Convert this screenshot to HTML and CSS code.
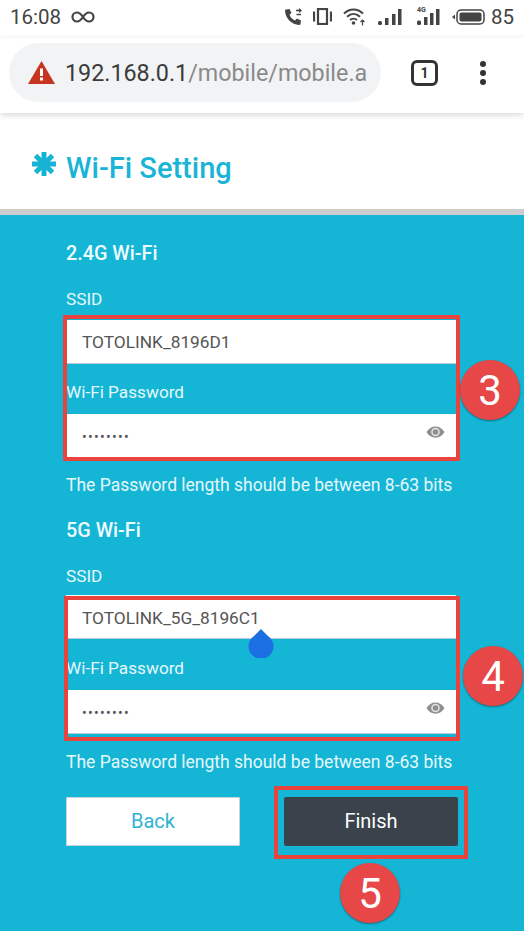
FILE: index.html
```html
<!DOCTYPE html>
<html lang="en">
<head>
<meta charset="UTF-8">
<meta name="viewport" content="width=device-width, initial-scale=1.0">
<title>Wi-Fi Setting</title>
<link rel="stylesheet" href="styles.css">
</head>
<body>
<div id="page">

<div class="statusbar">
  <span class="clock">16:08</span>
  <svg class="infinity" width="24" height="12" viewBox="0 0 24 12"><path d="M12 6C10 3 8.500 1.500 6 1.500A4.500 4.500 0 0 0 6 10.500C8.500 10.500 10 9 12 6C14 3 15.500 1.500 18 1.500A4.500 4.500 0 0 1 18 10.500C15.500 10.500 14 9 12 6Z" fill="none" stroke="#444" stroke-width="2.200"/></svg>
  <span class="spacer"></span>
  <svg class="ic-call" width="19" height="18" viewBox="0 0 19 18"><path d="M2 1.500L5.500 1L7.500 5L5.500 6.800C6.500 9.500 8.500 11.500 11 12.500L13 10.500L17 12.500L16.500 16C16.400 16.700 16 17 15.300 17C7.500 16.500 1.500 10.500 1 2.700C1 2 1.300 1.600 2 1.500Z" fill="#444"/><path d="M12 2.500H17M15 .8L17 2.500L15 4.200M17 6.500H12.500" fill="none" stroke="#444" stroke-width="1.300"/></svg>
  <svg class="ic-vibrate" width="19" height="17" viewBox="0 0 19 17"><rect x="5" y="1" width="9" height="15" fill="none" stroke="#444" stroke-width="2.200"/><path d="M1 3.500V13.500M18 3.500V13.500" stroke="#444" stroke-width="2.200"/></svg>
  <svg class="ic-wifi" width="23" height="19" viewBox="0 0 23 19"><path d="M1 6.500C6.500 1 14.500 1 20 6.500M4 9.800C8 6 13 6 17 9.800M7 13C9 11.200 12 11.200 14 13" fill="none" stroke="#444" stroke-width="2"/><circle cx="10.500" cy="16" r="1.800" fill="#444"/><path d="M19.500 18.500V13M17.500 15L19.500 13L21.500 15" fill="none" stroke="#444" stroke-width="1.200"/></svg>
  <svg class="ic-signal" width="24" height="16" viewBox="0 0 24 16"><g fill="#444"><rect x="0" y="12" width="4" height="4" rx="1.500"/><rect x="7" y="9" width="3.500" height="7"/><rect x="14" y="5" width="3.500" height="11"/><rect x="20" y="0" width="3.500" height="16"/></g></svg>
  <span class="ic-4g">
    <span class="tiny">4G</span>
    <svg width="23" height="16" viewBox="0 0 23 16"><g fill="#444"><rect x="0" y="11.500" width="4" height="4.500" rx="1.500"/><rect x="7" y="8" width="3.500" height="8"/><rect x="13" y="4" width="3.500" height="12"/><rect x="19" y="0" width="3.500" height="16"/></g></svg>
  </span>
  <svg class="ic-battery" width="33" height="16" viewBox="0 0 33 16"><path d="M0 8L3 5.500V10.500Z" fill="#444"/><rect x="5" y="1" width="27" height="14" rx="4" fill="none" stroke="#444" stroke-width="1.500"/><rect x="7.500" y="3.500" width="22" height="9" rx="2" fill="#444"/></svg>
  <span class="batt-num">85</span>
</div>

<div class="toolbar">
  <div class="urlbar">
    <svg class="warn" width="27" height="23" viewBox="0 0 27 23"><path d="M13.500 0L27 23H0Z" fill="#c6351f"/><rect x="12" y="7.500" width="3" height="7.500" fill="#fff"/><rect x="12" y="16.500" width="3" height="3" fill="#fff"/></svg>
    <span class="url"><span class="host">192.168.0.1</span>/mobile/mobile.a</span>
  </div>
  <span class="tabcount">1</span>
  <span class="menu"><i></i><i></i><i></i></span>
</div>

<div class="heading">
  <svg class="star" width="24" height="24" viewBox="0 0 24 24"><g stroke="#17b3d4" stroke-width="5"><path d="M12 0V24"/><path d="M0 12H24"/><path d="M3.500 3.500L20.500 20.500"/><path d="M20.500 3.500L3.500 20.500"/></g></svg>
  <h1>Wi-Fi Setting</h1>
</div>

<div class="content">
  <h2 class="band">2.4G Wi-Fi</h2>
  <label class="lbl ssid-lbl">SSID</label>
  <div class="field">TOTOLINK_8196D1</div>
  <label class="lbl pw-lbl">Wi-Fi Password</label>
  <div class="field">
    <span class="dots">••••••••</span>
    <svg class="eye" width="19" height="14" viewBox="0 0 19 14"><path d="M.5 7C4.500 -.5 14.500 -.5 18.500 7C14.500 14.500 4.500 14.500 .5 7Z" fill="#8f8f8f"/><circle cx="9.500" cy="7" r="4.300" fill="#e4e4e4"/><circle cx="9.500" cy="7" r="2.800" fill="#8f8f8f"/></svg>
  </div>
  <p class="hint">The Password length should be between 8-63 bits</p>

  <h2 class="band second">5G Wi-Fi</h2>
  <label class="lbl ssid-lbl">SSID</label>
  <div class="field short">TOTOLINK_5G_8196C1</div>
  <label class="lbl pw-lbl second">Wi-Fi Password</label>
  <div class="field">
    <span class="dots">••••••••</span>
    <svg class="eye" width="19" height="14" viewBox="0 0 19 14"><path d="M.5 7C4.500 -.5 14.500 -.5 18.500 7C14.500 14.500 4.500 14.500 .5 7Z" fill="#8f8f8f"/><circle cx="9.500" cy="7" r="4.300" fill="#e4e4e4"/><circle cx="9.500" cy="7" r="2.800" fill="#8f8f8f"/></svg>
  </div>
  <p class="hint second">The Password length should be between 8-63 bits</p>

  <div class="buttons">
    <button class="btn btn-back">Back</button>
    <button class="btn btn-finish">Finish</button>
  </div>
</div>

<!-- annotations drawn over the screenshot -->
<div class="mark mark-a"></div>
<div class="mark mark-b"></div>
<div class="mark mark-c"></div>
<div class="step step-3">3</div>
<div class="step step-4">4</div>
<div class="step step-5">5</div>
<svg class="handle" width="26" height="30" viewBox="0 0 26 30"><path d="M13 1L20 8A12.500 12.500 0 1 1 6 8Z" fill="#1c6fe3"/></svg>

</div>
</body>
</html>
```

FILE: styles.css
```css
* {
    box-sizing: border-box;
}
html, body {
    margin: 0;
    padding: 0;
}
body {
    font-family: Roboto, "Liberation Sans", sans-serif;
    background-color: #14b5d5;
}
#page {
    position: relative;
    width: 524px;
    height: 931px;
    overflow: hidden;
}

/* status bar */
.statusbar {
    display: flex;
    align-items: center;
    height: 38px;
    padding: 0 10px 5px;
    background-color: #fff;
    color: #444;
}
.clock {
    font-size: 20.500px;
    width: 51px;
}
.infinity {
    margin-left: 10px;
}
.spacer {
    flex: 1;
}
.ic-vibrate {
    margin-left: 10px;
}
.ic-wifi {
    margin-left: 11px;
}
.ic-signal {
    margin-left: 12px;
}
.ic-4g {
    position: relative;
    display: flex;
    margin-left: 15px;
}
.tiny {
    position: absolute;
    top: -3px;
    left: 0;
    font-size: 7px;
    font-weight: 700;
}
.ic-battery {
    margin-left: 12px;
}
.batt-num {
    margin-left: 6px;
    font-size: 20.500px;
}

/* browser toolbar */
.toolbar {
    position: relative;
    z-index: 1;
    display: flex;
    align-items: center;
    height: 75px;
    padding: 0 0 6px 9px;
    background-color: #fff;
    box-shadow: 0 2px 6px rgba(0, 0, 0, 0.16);
}
.urlbar {
    display: flex;
    align-items: center;
    width: 372px;
    height: 59px;
    padding-left: 19px;
    border-radius: 30px;
    background-color: #f1f3f4;
}
.url {
    margin-left: 10px;
    font-size: 23.300px;
    color: #8a8a8a;
    white-space: nowrap;
}
.host {
    color: #3b3b3b;
}
.tabcount {
    display: flex;
    align-items: center;
    justify-content: center;
    width: 27px;
    height: 26px;
    margin-left: 30px;
    border: 3px solid #333;
    border-radius: 6px;
    font-size: 14px;
    font-weight: 700;
    color: #333;
}
.menu {
    display: flex;
    flex-direction: column;
    gap: 3px;
    margin-left: 42px;
}
.menu i {
    width: 6px;
    height: 6px;
    border-radius: 50%;
    background-color: #333;
}

/* page heading */
.heading {
    display: flex;
    align-items: center;
    height: 102px;
    padding: 14px 0 0 32px;
    background-color: #fff;
    border-bottom: 6px solid #cdcdcd;
}
.star {
    margin-right: 10px;
    margin-top: -8px;
}
.heading h1 {
    margin: 0;
    font-size: 29px;
    font-weight: 500;
    color: #1ab5d6;
}

/* form */
.content {
    padding: 27px 68px 0 66px;
    color: #fff;
}
.band {
    margin: 0 0 -1px;
    font-size: 19.800px;
    line-height: 24px;
    font-weight: 500;
    color: #eefbff;
}
.band.second {
    margin-top: 22px;
}
.lbl {
    display: block;
    font-size: 17.200px;
    line-height: 24px;
    color: #e6f8fc;
}
.ssid-lbl {
    margin-top: 22px;
    margin-bottom: 9px;
}
.pw-lbl {
    margin-top: 17px;
    margin-bottom: 10px;
}
.pw-lbl.second {
    margin-top: 18px;
}
.field {
    position: relative;
    display: flex;
    align-items: center;
    height: 43px;
    padding-left: 16px;
    background-color: #fff;
    box-shadow: 0 1px 0 #b9c9d6;
    font-size: 17.300px;
    color: #555;
}
.field.short {
    margin-top: -2px;
    padding-top: 3px;
}
.dots {
    font-size: 14px;
    letter-spacing: 1.270px;
    padding-top: 3px;
}
.eye {
    position: absolute;
    right: 11px;
    top: 11px;
}
.hint {
    margin: 16px 0 0;
    font-size: 17.500px;
    line-height: 24px;
    white-space: nowrap;
    color: #e6f8fc;
}
.hint.second {
    margin-top: 17px;
}
.buttons {
    display: flex;
    justify-content: space-between;
    margin: 23px 0 0;
    width: 392px;
}
.btn {
    width: 174px;
    height: 49px;
    padding: 0 0 2px;
    border: none;
    border-radius: 2px;
    font-family: inherit;
    font-size: 20px;
}
.btn-back {
    background-color: #fff;
    color: #2fb3d3;
    box-shadow: inset 0 0 0 1px #c5d5dc;
}
.btn-finish {
    background-color: #3a424c;
    color: #fff;
}

/* red annotations */
.mark {
    position: absolute;
    border: 4px solid #e8433c;
}
.mark-a {
    left: 63px;
    top: 315px;
    width: 397px;
    height: 146px;
}
.mark-b {
    left: 64px;
    top: 596px;
    width: 396px;
    height: 145px;
}
.mark-c {
    left: 274px;
    top: 786px;
    width: 194px;
    height: 73px;
}
.step {
    position: absolute;
    display: flex;
    align-items: center;
    justify-content: center;
    width: 60px;
    height: 60px;
    border-radius: 50%;
    background-color: #e74746;
    box-shadow: 0 1px 2px rgba(0, 0, 0, 0.4);
    font-size: 42px;
    color: #fff;
}
.step-3 {
    left: 460px;
    top: 360px;
}
.step-4 {
    left: 463px;
    top: 646px;
}
.step-5 {
    left: 340px;
    top: 863px;
}
.handle {
    position: absolute;
    left: 248px;
    top: 628px;
}
```
